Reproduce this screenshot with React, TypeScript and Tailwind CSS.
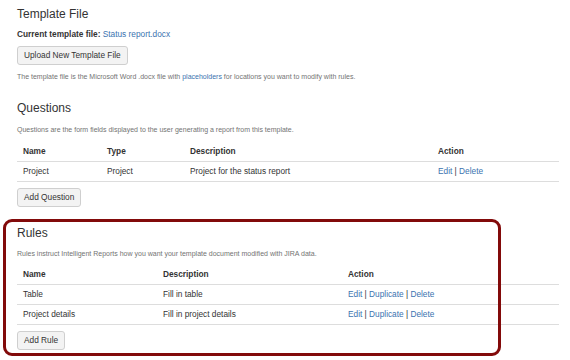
import React from "react";

interface Question {
  name: string;
  type: string;
  description: string;
}

interface Rule {
  name: string;
  description: string;
}

const questions: Question[] = [
  { name: "Project", type: "Project", description: "Project for the status report" },
];

const rules: Rule[] = [
  { name: "Table", description: "Fill in table" },
  { name: "Project details", description: "Fill in project details" },
];

const Btn: React.FC<{ label: string }> = ({ label }) => (
  <button className="h-[19px] px-[6px] bg-[#f3f3f3] border border-[#cfcfcf] rounded-[3px] text-[8.3px] leading-[17px] text-[#333]">
    {label}
  </button>
);

const Link: React.FC<{ children: React.ReactNode }> = ({ children }) => (
  <a className="text-[#3b73af]">{children}</a>
);

const Sep = () => <span className="text-[#333]"> | </span>;

const App: React.FC = () => {
  return (
    <div className="relative w-[570px] h-[360px] overflow-hidden bg-white pl-[17px] pr-[11px] text-[#333] font-['Liberation_Sans',Arial,sans-serif]">
      {/* template file */}
      <h2 className="pt-[6px] text-[12px] leading-[16px]">Template File</h2>
      <div className="mt-[6px] text-[8.3px] leading-[12px]">
        <span className="font-bold">Current template file: </span>
        <Link>Status report.docx</Link>
      </div>
      <div className="mt-[6px] flex">
        <Btn label="Upload New Template File" />
      </div>
      <p className="mt-[7px] text-[7px] leading-[10px] text-[#737373]">
        The template file is the Microsoft Word .docx file with <Link>placeholders</Link> for locations you want to modify with rules.
      </p>

      {/* questions */}
      <h2 className="mt-[18px] text-[12px] leading-[16px]">Questions</h2>
      <p className="mt-[9px] text-[7px] leading-[10px] text-[#737373]">
        Questions are the form fields displayed to the user generating a report from this template.
      </p>
      <table className="mt-[6px] w-full table-fixed border-collapse text-[8.3px] text-left">
        <thead>
          <tr className="h-[20px] border-b border-[#dddddd]">
            <th className="w-[84px] pl-[6px] font-bold">Name</th>
            <th className="w-[83px] pl-[6px] font-bold">Type</th>
            <th className="w-[248px] pl-[6px] font-bold">Description</th>
            <th className="pl-[6px] font-bold">Action</th>
          </tr>
        </thead>
        <tbody>
          {questions.map((q) => (
            <tr key={q.name} className="h-[20px] border-b border-[#dddddd]">
              <td className="pl-[6px]">{q.name}</td>
              <td className="pl-[6px]">{q.type}</td>
              <td className="pl-[6px]">{q.description}</td>
              <td className="pl-[6px]">
                <Link>Edit</Link>
                <Sep />
                <Link>Delete</Link>
              </td>
            </tr>
          ))}
        </tbody>
      </table>
      <div className="mt-[6px] flex">
        <Btn label="Add Question" />
      </div>

      {/* rules */}
      <h2 className="mt-[18px] text-[12px] leading-[16px]">Rules</h2>
      <p className="mt-[8px] text-[7px] leading-[10px] text-[#737373]">
        Rules instruct Intelligent Reports how you want your template document modified with JIRA data.
      </p>
      <table className="mt-[6px] w-full table-fixed border-collapse text-[8.3px] text-left">
        <thead>
          <tr className="h-[20px] border-b border-[#dddddd]">
            <th className="w-[140px] pl-[6px] font-bold">Name</th>
            <th className="w-[185px] pl-[6px] font-bold">Description</th>
            <th className="pl-[6px] font-bold">Action</th>
          </tr>
        </thead>
        <tbody>
          {rules.map((r) => (
            <tr key={r.name} className="h-[20px] border-b border-[#dddddd]">
              <td className="pl-[6px]">{r.name}</td>
              <td className="pl-[6px]">{r.description}</td>
              <td className="pl-[6px]">
                <Link>Edit</Link>
                <Sep />
                <Link>Duplicate</Link>
                <Sep />
                <Link>Delete</Link>
              </td>
            </tr>
          ))}
        </tbody>
      </table>
      <div className="mt-[6px] flex">
        <Btn label="Add Rule" />
      </div>

      {/* highlight annotation */}
      <div className="absolute left-[3px] top-[219px] w-[498px] h-[137px] border-[3px] border-[#820a0a] rounded-[9px] pointer-events-none" />
    </div>
  );
};

export default App;
